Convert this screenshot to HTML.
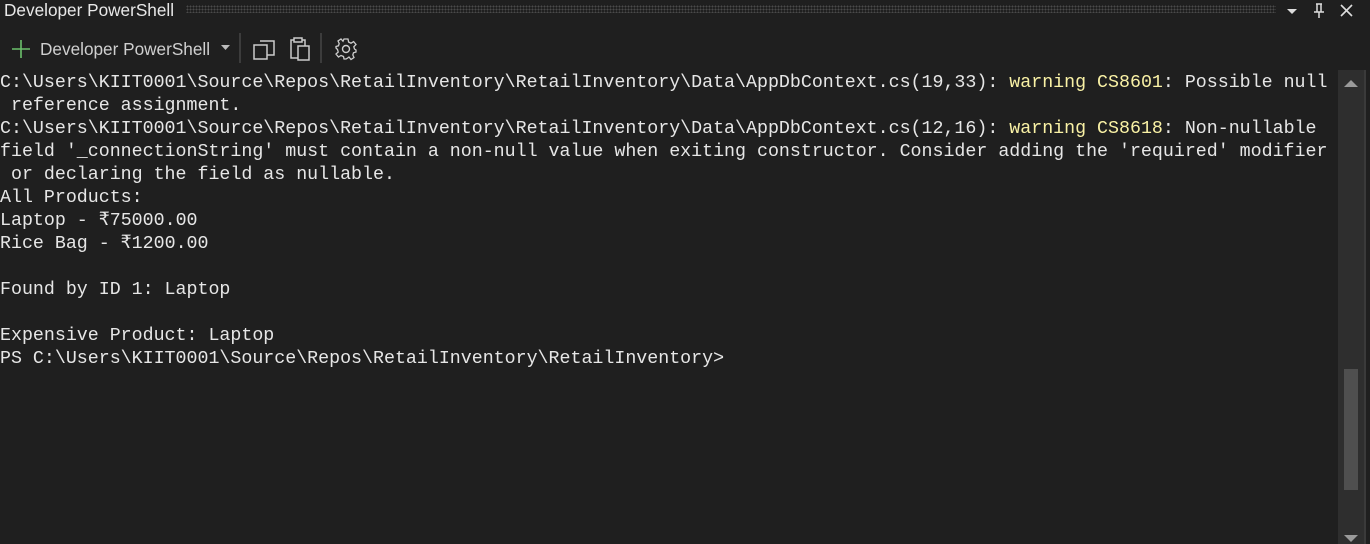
<!DOCTYPE html>
<html><head><meta charset="utf-8"><style>
html,body{margin:0;padding:0;width:1370px;height:544px;overflow:hidden;background:#1f1f1f;font-family:"Liberation Sans",sans-serif}
.title{position:absolute;left:0;top:0;width:1370px;height:21px;background:#1f1f1f}
.title .t{position:absolute;left:4px;top:0;font-size:17.2px;color:#e8e8e8;line-height:21px}
.dots{position:absolute;left:186px;top:5px;width:1090px;height:8px;background-image:radial-gradient(#4a4a4a 40%,transparent 45%);background-size:3px 3px}
.tb{position:absolute;top:30px;height:38px;font-size:17.2px;color:#cfcfcf}
.sep{position:absolute;top:33px;width:2px;height:30px;background:#3c3c3c}
pre{position:absolute;left:0;top:72px;margin:0;font-family:"Liberation Mono",monospace;font-size:18.3px;line-height:23px;color:#e6e6e6;white-space:pre}
.y{color:#f9f1a5}
.track{position:absolute;left:1338px;top:70px;width:26px;height:474px;background:#2e2e2e}
.thumb{position:absolute;left:1344px;top:369px;width:14px;height:121px;background:#4f4f4f}
.edge{position:absolute;left:1364px;top:70px;width:2px;height:474px;background:#3a3a3a}
</style></head><body>
<div class="title"><div class="t">Developer PowerShell</div><div class="dots"></div>
<svg style="position:absolute;left:1284px;top:3px" width="86" height="16">
<path d="M3 6 L13 6 L8 11 Z" fill="#ddd"/>
<path d="M32 1 L38 1 M33 1 L33 9 M37 1 L37 9 M30 9 L40 9 M35 9 L35 15" stroke="#ddd" stroke-width="1.5" fill="none"/>
<path d="M57 2 L68 13 M68 2 L57 13" stroke="#ddd" stroke-width="1.6"/>
</svg></div>
<svg style="position:absolute;left:10px;top:38px" width="22" height="22"><path d="M11 2 V20 M2 11 H20" stroke="#6cc16c" stroke-width="1.6"/></svg>
<div class="tb" style="left:40px;line-height:38px">Developer PowerShell</div>
<svg style="position:absolute;left:221px;top:45px" width="10" height="6"><path d="M0 0 H9 L4.5 5 Z" fill="#bbb"/></svg>
<div class="sep" style="left:239px"></div>
<svg style="position:absolute;left:252px;top:37px" width="26" height="24"><path d="M8 4 H22 V18 H15 M2 8 H15 V22 H2 Z" stroke="#ccc" stroke-width="1.5" fill="none"/></svg>
<svg style="position:absolute;left:287px;top:36px" width="26" height="26"><path d="M7 4 H4 V22 H11 M15 4 H18 V10 M7 2 H15 V6 H7 Z M11 10 H22 V24 H11 Z" stroke="#ccc" stroke-width="1.5" fill="none"/></svg>
<div class="sep" style="left:320px"></div>
<svg style="position:absolute;left:334px;top:37px" width="24" height="24"><circle cx="12" cy="12" r="3.5" stroke="#ccc" stroke-width="1.4" fill="none"/><path d="M10 2 H14 L14.6 5 L17 6.2 L19.6 4.6 L22 7.5 L19.8 9.8 L20.5 12 L22 13 V15 L19.5 15.8 L18.8 18 L20 20.5 L17 22.5 L15 20 L13 21.5 L12 22 H10 L9.5 19.5 L7 18.5 L4.5 20 L2 17 L4.2 15 L3.5 12.5 L2 11 V9.5 L4.5 8.8 L5.2 6.5 L4 4 L7 2 L9 4.2 Z" stroke="#ccc" stroke-width="1.3" fill="none"/></svg>
<pre>C:\Users\KIIT0001\Source\Repos\RetailInventory\RetailInventory\Data\AppDbContext.cs(19,33): <span class="y">warning CS8601</span>: Possible null
 reference assignment.
C:\Users\KIIT0001\Source\Repos\RetailInventory\RetailInventory\Data\AppDbContext.cs(12,16): <span class="y">warning CS8618</span>: Non-nullable
field '_connectionString' must contain a non-null value when exiting constructor. Consider adding the 'required' modifier
 or declaring the field as nullable.
All Products:
Laptop - ₹75000.00
Rice Bag - ₹1200.00

Found by ID 1: Laptop

Expensive Product: Laptop
PS C:\Users\KIIT0001\Source\Repos\RetailInventory\RetailInventory&gt;</pre>
<div class="track"></div><div class="edge"></div><div class="thumb"></div>
<svg style="position:absolute;left:1344px;top:79px" width="14" height="9"><path d="M0 8 L7 1 L14 8 Z" fill="#9a9a9a"/></svg>
<svg style="position:absolute;left:1344px;top:535px" width="14" height="9"><path d="M0 0 L7 7 L14 0 Z" fill="#9a9a9a"/></svg>
</body></html>
